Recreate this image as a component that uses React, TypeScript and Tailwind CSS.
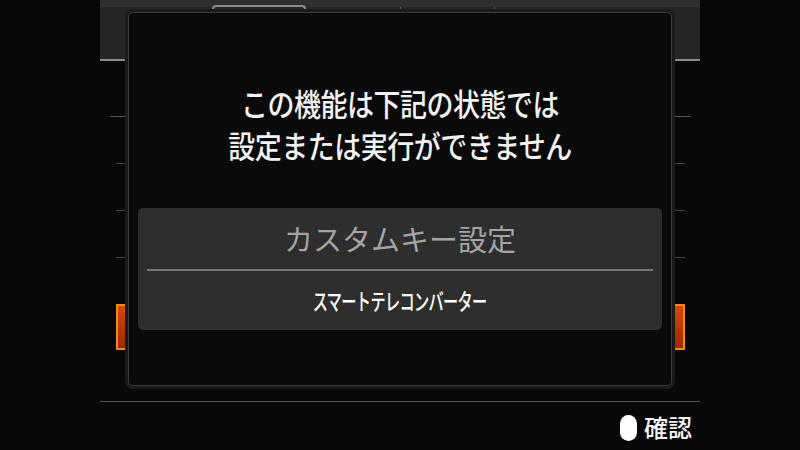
import React from 'react';

const jp = { fontFamily: '"Noto Sans CJK JP", "Noto Sans", sans-serif' };

const OrangeKey: React.FC = () => (
  <div className="w-[13px] h-[46px] border-2 border-[#f08a10] bg-gradient-to-b from-[#d84808] to-[#a02800]" />
);

const App: React.FC = () => {
  return (
    <div className="relative w-[800px] h-[450px] overflow-hidden bg-[#080808] text-white" style={jp}>
      {/* background menu screen */}
      <div className="flex flex-col h-full">
        {/* tab band */}
        <div className="mx-[100px] h-[61px] bg-[#262626] border-b-2 border-[#8a8a8a] flex flex-col">
          <div className="h-[7px] bg-[#2f2f2f]" />
          <div className="flex flex-1">
            <div className="ml-[112px] w-[94px] h-[20px] -mt-[2px] border-2 border-b-0 border-[#8a8a8a] rounded-t-[4px]" />
            <div className="ml-[94px] w-px h-[8px] bg-[#555]" />
            <div className="ml-[93px] w-px h-[8px] bg-[#555]" />
          </div>
        </div>

        {/* rows with side ticks */}
        <div className="flex justify-between px-[110px] mt-[55px]">
          <div className="flex flex-col items-end w-[18px]">
            <div className="w-[18px] h-px bg-[#555]" />
            <div className="w-[12px] h-px bg-[#444] mt-[46px]" />
            <div className="w-[12px] h-px bg-[#444] mt-[46px]" />
            <div className="w-[12px] h-px bg-[#444] mt-[46px]" />
            <div className="w-[3px] h-[14px] bg-[#9a9a9a] mt-[9px]" />
            <div className="mt-[23px] -mr-[1px]"><OrangeKey /></div>
          </div>
          <div className="flex flex-col items-start w-[19px] mr-[-1px]">
            <div className="w-[19px] h-px bg-[#555]" />
            <div className="w-[13px] h-px bg-[#444] mt-[46px]" />
            <div className="w-[13px] h-px bg-[#444] mt-[46px]" />
            <div className="w-[13px] h-px bg-[#444] mt-[46px]" />
            <div className="mt-[46px]"><OrangeKey /></div>
          </div>
        </div>

        {/* footer */}
        <div className="mt-auto mx-[100px] h-[49px] border-t border-[#555] flex items-center justify-end pr-[8px]">
          <span className="w-[17px] h-[26px] rounded-full bg-white mr-[7px] mt-[4px]" />
          <span className="text-[24px] leading-none font-medium text-[#f4f4f4] mt-[2px]">確認</span>
        </div>
      </div>

      {/* dialog overlay */}
      <div className="absolute left-[128px] top-[12px] w-[544px] h-[374px] bg-[#0a0a0a] border border-[#3a3a3a] rounded-[4px] shadow-[0_0_0_3px_#1b1b1b] flex flex-col">
        <div className="pt-[70px] text-center text-[27px] leading-[42px] font-medium text-[#f2f2f2] tracking-[-0.5px]">
          <div className="scale-y-[1.12]">この機能は下記の状態では</div>
          <div className="scale-y-[1.12]">設定または実行ができません</div>
        </div>
        <div className="mt-[41px] mx-[9px] h-[122px] bg-[#2e2e2e] rounded-[5px] flex flex-col">
          <div className="h-[61px] flex items-center justify-center text-[29px] leading-none text-[#a4a4a4]">
            カスタムキー設定
          </div>
          <div className="mx-[9px] h-[2px] bg-[#777]" />
          <div className="flex-1 flex items-center justify-center">
            <span className="inline-block text-[23px] leading-none font-medium text-white scale-x-[0.66] tracking-[-1px]">
              スマートテレコンバーター
            </span>
          </div>
        </div>
      </div>
    </div>
  );
};

export default App;
